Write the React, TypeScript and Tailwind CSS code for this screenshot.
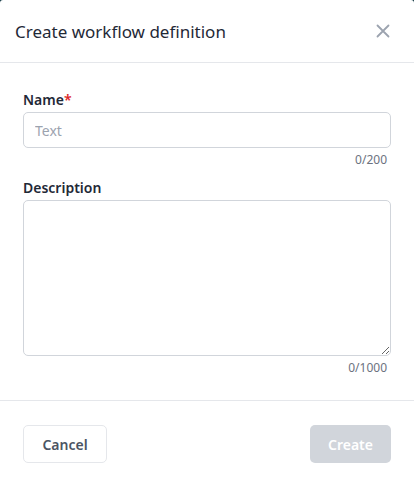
import React, { useState } from 'react'

const font = { fontFamily: '"Noto Sans", "Open Sans", sans-serif' }

export default function App() {
  const [name, setName] = useState('')
  const [desc, setDesc] = useState('')

  return (
    <div className="min-h-screen bg-[#0f3640]" style={font}>
      <div className="bg-white rounded-t-[3px] w-[414px] h-[483px] flex flex-col">
        {/* Header */}
        <div className="h-[63px] flex items-center justify-between pl-[15px] pr-[24px] border-b border-[#e5e7eb]">
          <h2 className="text-[17px] text-[#1f2937] leading-none">Create workflow definition</h2>
          <button className="text-[#9ca3af]">
            <svg width="14" height="14" viewBox="0 0 14 14" fill="none" stroke="currentColor" strokeWidth="1.8" strokeLinecap="round">
              <path d="M1.5 1.5l11 11M12.5 1.5l-11 11" />
            </svg>
          </button>
        </div>

        {/* Body */}
        <div className="px-[23px] pt-[27px] pb-[24px] flex flex-col border-b border-[#e5e7eb]">
          <label className="text-[14px] font-semibold text-[#1f2937] leading-[20px] mb-[2px]">
            Name<span className="text-[#dc2626]">*</span>
          </label>
          <input
            value={name}
            onChange={(e) => setName(e.target.value)}
            placeholder="Text"
            className="h-[36px] w-full rounded-[5px] border border-[#d1d5db] px-[11px] text-[14px] text-[#1f2937] placeholder:text-[#9ca3af] outline-none"
          />
          <div className="text-right text-[12px] text-[#6b7280] leading-[16px] mt-[4px] pr-[4px]">{name.length}/200</div>
          <label className="text-[14px] font-semibold text-[#1f2937] leading-[20px] mt-[10px] mb-[2px]">Description</label>
          <textarea
            value={desc}
            onChange={(e) => setDesc(e.target.value)}
            className="h-[156px] w-full rounded-[5px] border border-[#d1d5db] px-[11px] py-[8px] text-[14px] text-[#1f2937] outline-none"
          />
          <div className="text-right text-[12px] text-[#6b7280] leading-[16px] mt-[4px] pr-[4px]">{desc.length}/1000</div>
        </div>

        {/* Footer */}
        <div className="px-[23px] pt-[24px] flex items-start justify-between">
          <button className="h-[38px] w-[84px] rounded-[5px] border border-[#e5e7eb] text-[14px] font-semibold text-[#4b5563]">
            Cancel
          </button>
          <button disabled className="h-[38px] w-[81px] rounded-[5px] bg-[#d1d5db] text-[14px] font-semibold text-white">
            Create
          </button>
        </div>
      </div>
    </div>
  )
}
